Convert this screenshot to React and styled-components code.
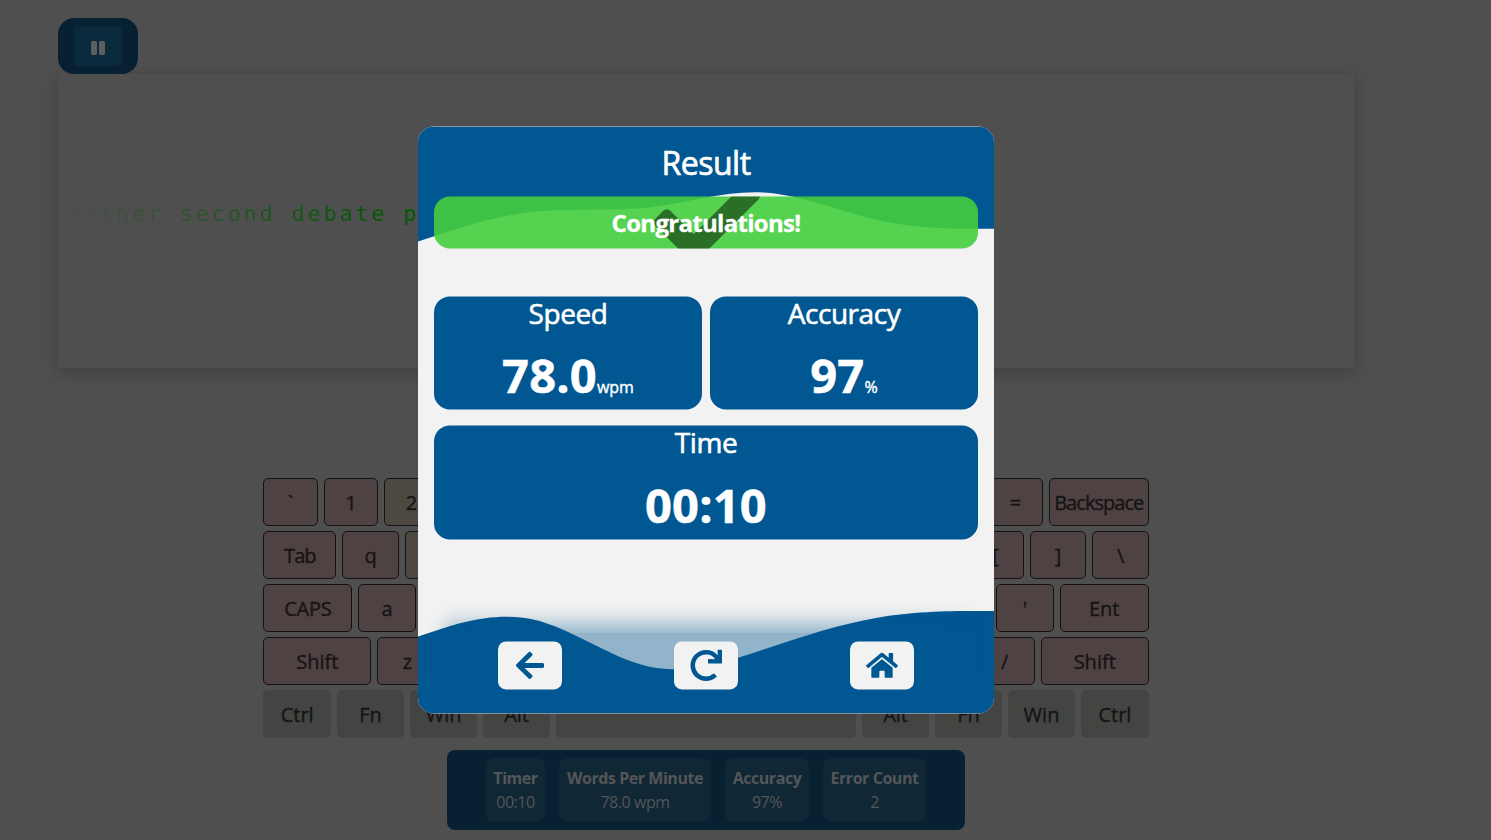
import React from 'react';
import styled, { createGlobalStyle } from 'styled-components';
import { FaArrowLeft, FaCheck, FaHome, FaPause, FaRedo } from 'react-icons/fa';

const blue = '#005792';

const GlobalStyle = createGlobalStyle`
  *, *::before, *::after { box-sizing: border-box; }
  html, body { margin: 0; height: 100%; overflow: hidden; background: #4f4f4f; }
  body { font-family: "Open Sans", "Noto Sans", sans-serif; }
`;

const Page = styled.div`
  position: relative;
  width: 1491px;
  height: 840px;
  padding: 18px 137px 0 58px;
  overflow: hidden;
`;

const Toolbar = styled.div`
  position: relative;
  z-index: 1;
  width: 80px;
  height: 56px;
  padding: 8px 16px;
  border-radius: 16px;
  background: #072133;
`;

const PauseButton = styled.button`
  display: flex;
  align-items: center;
  justify-content: center;
  width: 48px;
  height: 40px;
  padding: 4px 0 0;
  border: 0;
  border-radius: 4px;
  background: #0a293d;
  color: #5c5e5f;
  font-size: 16px;
`;

const TypingPanel = styled.section`
  width: 1296px;
  height: 294px;
  padding: 125px 0 0 10px;
  box-shadow: 0 4px 16px rgba(0, 0, 0, 0.2);
`;

const TypedText = styled.div`
  width: 350px;
  font: 22px/30px "DejaVu Sans Mono", monospace;
  letter-spacing: 2.72px;
  white-space: pre;
  color: #025a02;
  mask-image: linear-gradient(to right, transparent -16px, #000 330px);
`;

const Keyboard = styled.div`
  display: flex;
  flex-direction: column;
  gap: 5px;
  width: 885.5px;
  margin: 110px 0 0 205.3px;
`;

const KeyRow = styled.div`
  display: flex;
  gap: 6px;
`;

const keyColors = {
  pink: '#4f4242',
  sand: '#4d4840',
  plain: '#434543',
};

const Key = styled.div`
  display: flex;
  align-items: center;
  justify-content: center;
  flex: ${(p) => (p.$width ? `0 0 ${p.$width}px` : '1 1 0')};
  min-width: 0;
  height: 48px;
  padding-top: 1px;
  border: ${(p) => (p.$tone === 'plain' ? '0' : '1px solid #121212')};
  border-radius: 5px;
  background: ${(p) => keyColors[p.$tone]};
  color: #151515;
  font-size: 20px;
  line-height: 26px;
  -webkit-text-stroke: 0.4px #151515;
  letter-spacing: ${(p) => p.$tracking || 0}px;
`;

const StatsBar = styled.div`
  display: grid;
  grid-template-columns: 59px 152px 84px 103px;
  justify-content: center;
  gap: 14px;
  width: 518px;
  height: 80px;
  margin: 12px 0 0 389px;
  padding: 8px 0;
  border-radius: 8px;
  background: #072133;
`;

const Chip = styled.div`
  padding-top: 8px;
  border-radius: 8px;
  background: #102736;
  color: #555657;
  text-align: center;
  font-size: 16px;
  line-height: 24px;
  letter-spacing: -0.45px;
  white-space: nowrap;
`;

const ChipLabel = styled.div`
  font-weight: 700;
`;

const Overlay = styled.div`
  position: absolute;
  inset: 0;
  padding: 126px 0 0 418px;
`;

const Modal = styled.div`
  position: relative;
  display: flex;
  flex-direction: column;
  width: 576px;
  height: 587px;
  padding: 16px;
  border-radius: 16px;
  overflow: hidden;
  background: #f2f2f2;
  color: #fff;
  text-align: center;
  transform: translateY(0.4px);
`;

const Wave = styled.svg`
  position: absolute;
  left: 0;
  ${(p) => p.$edge}: 0;
  width: 576px;
  height: 128px;
  fill: ${blue};
`;

const Title = styled.h1`
  position: relative;
  margin: 0;
  height: 54px;
  font-size: 32px;
  line-height: 41px;
  font-weight: 400;
  letter-spacing: -0.5px;
  -webkit-text-stroke: 0.7px #fff;
`;

const Banner = styled.div`
  position: relative;
  display: flex;
  align-items: center;
  justify-content: center;
  height: 52px;
  margin-bottom: 48px;
  border-radius: 16px;
  overflow: hidden;
  background: rgba(68, 206, 61, 0.9);
`;

const BannerCheck = styled(FaCheck)`
  position: absolute;
  top: -27px;
  left: 219.5px;
  color: rgba(0, 10, 0, 0.5);
  font-size: 106px;
`;

const BannerText = styled.span`
  position: relative;
  font-size: 24px;
  font-weight: 700;
  letter-spacing: -0.7px;
  -webkit-text-stroke: 0.3px #fff;
`;

const Results = styled.div`
  display: grid;
  grid-template-columns: 1fr 1fr;
  gap: 16px 8px;
`;

const CardTitle = styled.h2`
  margin: 0;
  font-size: 28px;
  line-height: 34px;
  font-weight: 400;
  letter-spacing: ${(p) => p.$tracking || 0}px;
  -webkit-text-stroke: 0.6px #fff;
`;

const ResultCard = styled.div`
  grid-column: ${(p) => (p.$wide ? 'span 2' : 'auto')};
  height: ${(p) => (p.$wide ? 114 : 113)}px;
  border-radius: 16px;
  background: ${blue};

  ${CardTitle} {
    margin-bottom: ${(p) => (p.$wide ? 11 : 10)}px;
  }
`;

const CardValue = styled.div`
  font-size: 47px;
  line-height: 71px;
  font-weight: 700;
  letter-spacing: 0.2px;
  -webkit-text-stroke: 0.5px #fff;
`;

const Unit = styled.span`
  font-size: 16px;
  font-weight: 400;
  letter-spacing: 0;
  -webkit-text-stroke: 0.4px #fff;
`;

const Footer = styled.div`
  position: relative;
  display: flex;
  justify-content: space-around;
  margin-top: auto;
  padding: 8px;

  &::before {
    content: '';
    position: absolute;
    inset: 0;
    background: rgba(0, 87, 146, 0.4);
    box-shadow: 0 -22px 20px -12px rgba(0, 87, 146, 0.4);
    transform: translateY(-0.4px);
  }
`;

const ActionButton = styled.button`
  position: relative;
  display: flex;
  align-items: center;
  justify-content: center;
  width: 64px;
  height: 48px;
  padding: 0;
  border: 0;
  border-radius: 8px;
  background: #f2f2f2;
  color: ${blue};
  font-size: 32px;
`;

const blanks = (count) => Array.from({ length: count }, () => ['']);

const keyRows = [
  [['`'], ['1'], ['2', 0, 0, 'sand'], ...blanks(9), ['='], ['Backspace', 100, -0.95]],
  [['Tab', 73, -1], ['q'], ['', 0, 0, 'sand'], ...blanks(8), ['['], [']'], ['\\']],
  [['CAPS', 89, -0.3], ['a'], ...blanks(9), ["'"], ['Ent', 89]],
  [['Shift', 108], ['z'], ...blanks(8), ['/'], ['Shift', 108]],
];

const bottomRow = [['Ctrl', 67.8], ['Fn'], ['Win'], ['Alt'], ['', 300], ['Alt'], ['Fn'], ['Win'], ['Ctrl', 67.8]];

const stats = [
  ['Timer', '00:10'],
  ['Words Per Minute', '78.0 wpm'],
  ['Accuracy', '97%'],
  ['Error Count', '2'],
];

export default function App() {
  return (
    <>
      <GlobalStyle />
      <Page>
        <Toolbar>
          <PauseButton aria-label="Pause">
            <FaPause />
          </PauseButton>
        </Toolbar>
        <TypingPanel>
          <TypedText>artner second debate p</TypedText>
        </TypingPanel>
        <Keyboard>
          {keyRows.map((row, r) => (
            <KeyRow key={r}>
              {row.map(([label, width, tracking, tone], i) => (
                <Key key={i} $width={width} $tracking={tracking} $tone={tone || 'pink'}>
                  {label}
                </Key>
              ))}
            </KeyRow>
          ))}
          <KeyRow>
            {bottomRow.map(([label, width], i) => (
              <Key key={i} $width={width} $tone="plain">
                {label}
              </Key>
            ))}
          </KeyRow>
        </Keyboard>
        <StatsBar>
          {stats.map(([label, value]) => (
            <Chip key={label}>
              <ChipLabel>{label}</ChipLabel>
              {value}
            </Chip>
          ))}
        </StatsBar>
        <Overlay>
          <Modal>
            <Wave $edge="top" viewBox="0 0 1440 320">
              <path d="M0,288L48,272C96,256,192,224,288,213.3C384,203,480,213,576,202.7C672,192,768,160,864,165.3C960,171,1056,213,1152,234.7C1248,256,1344,256,1392,256L1440,256L1440,0L0,0Z" />
            </Wave>
            <Wave $edge="bottom" viewBox="0 0 1440 320">
              <path d="M0,128L48,112C96,96,192,64,288,85.3C384,107,480,181,576,202.7C672,224,768,192,864,160C960,128,1056,96,1152,80C1248,64,1344,64,1392,64L1440,64L1440,320L0,320Z" />
            </Wave>
            <Title>Result</Title>
            <Banner>
              <BannerCheck />
              <BannerText>Congratulations!</BannerText>
            </Banner>
            <Results>
              <ResultCard>
                <CardTitle $tracking={-0.4}>Speed</CardTitle>
                <CardValue>
                  78.0<Unit>wpm</Unit>
                </CardValue>
              </ResultCard>
              <ResultCard>
                <CardTitle $tracking={-0.45}>Accuracy</CardTitle>
                <CardValue>
                  97<Unit>%</Unit>
                </CardValue>
              </ResultCard>
              <ResultCard $wide>
                <CardTitle $tracking={-0.4}>Time</CardTitle>
                <CardValue>00:10</CardValue>
              </ResultCard>
            </Results>
            <Footer>
              <ActionButton aria-label="Back">
                <FaArrowLeft />
              </ActionButton>
              <ActionButton aria-label="Retry">
                <FaRedo />
              </ActionButton>
              <ActionButton aria-label="Home">
                <FaHome />
              </ActionButton>
            </Footer>
          </Modal>
        </Overlay>
      </Page>
    </>
  );
}
